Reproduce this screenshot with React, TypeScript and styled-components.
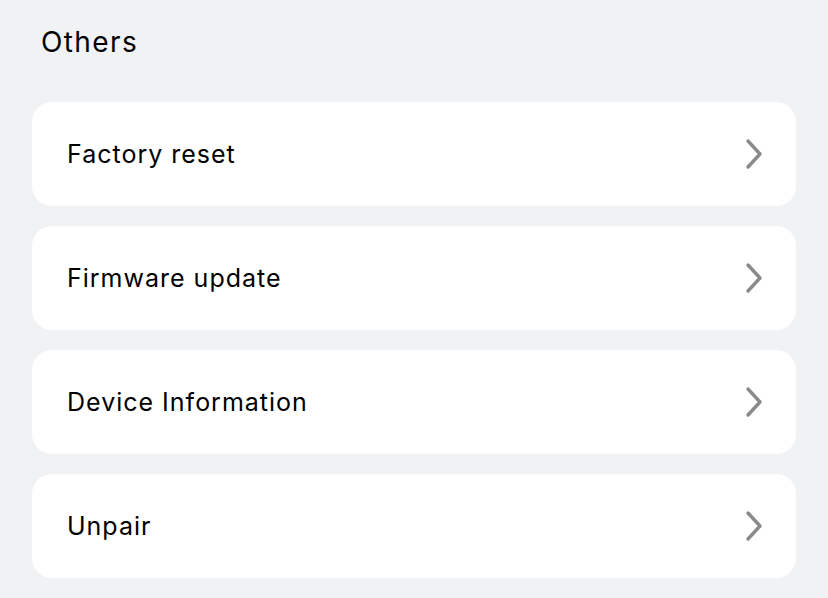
import React from "react";
import styled, { createGlobalStyle } from "styled-components";

const Global = createGlobalStyle`
  html, body { margin: 0; padding: 0; background: #f1f2f4; }
  body { font-family: Inter, "Noto Sans", sans-serif; -webkit-font-smoothing: antialiased; }
`;

const Page = styled.div`
  padding: 22px 32px 20px 32px;
  display: flex;
  flex-direction: column;
`;

const Title = styled.h2`
  margin: 0 0 0 9px;
  height: 40px;
  line-height: 40px;
  font-size: 28px;
  font-weight: 400;
  letter-spacing: 1.4px;
  color: #000;
`;

const List = styled.div`
  margin-top: 40px;
  display: flex;
  flex-direction: column;
  gap: 20px;
`;

const Card = styled.div`
  height: 104px;
  background: #fff;
  border-radius: 20px;
  display: flex;
  align-items: center;
  justify-content: space-between;
  padding: 0 32px 0 35px;
`;

const Label = styled.span`
  font-size: 25px;
  letter-spacing: 1px;
  color: #000;
`;

const Chevron = () => (
  <svg width="20" height="32" viewBox="0 0 20 32" fill="none">
    <path d="M4 3 L16 16 L4 29" stroke="#8a8a8a" strokeWidth="3.4" strokeLinecap="round" strokeLinejoin="round" />
  </svg>
);

const items = ["Factory reset", "Firmware update", "Device Information", "Unpair"];

export default function App() {
  return (
    <>
      <Global />
      <Page>
        <Title>Others</Title>
        <List>
          {items.map((t) => (
            <Card key={t}>
              <Label>{t}</Label>
              <Chevron />
            </Card>
          ))}
        </List>
      </Page>
    </>
  );
}
